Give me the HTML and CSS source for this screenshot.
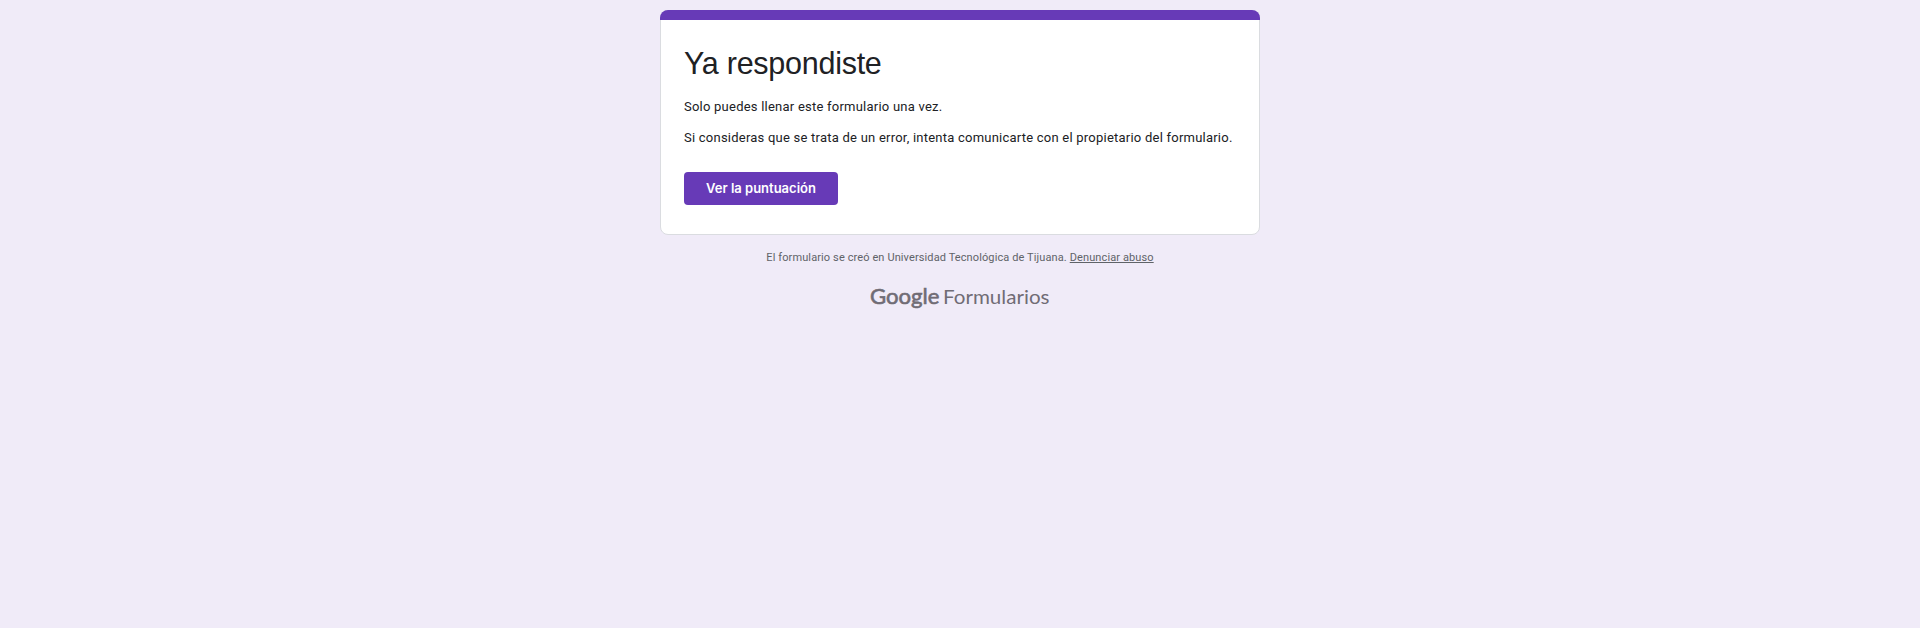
FILE: index.html
```html
<!DOCTYPE html>
<html lang="es">
<head>
<meta charset="utf-8">
<title>Ya respondiste</title>
<link rel="stylesheet" href="styles.css">
</head>
<body>
<main class="page">
  <section class="card">
    <div class="card-accent"></div>
    <div class="card-body">
      <h1 class="title">Ya respondiste</h1>
      <p class="message">Solo puedes llenar este formulario una vez.</p>
      <p class="message">Si consideras que se trata de un error, intenta comunicarte con el propietario del formulario.</p>
      <button class="score-button" type="button"><span>Ver la puntuación</span></button>
    </div>
  </section>
  <footer class="footer">
    <p class="origin">El formulario se creó en Universidad Tecnológica de Tijuana. <a class="report" href="#">Denunciar abuso</a></p>
    <svg class="logo" width="180" height="30" viewBox="0 0 180 30" role="img" aria-label="Google Formularios">
      <text class="logo-google" x="0" y="21.5" textLength="69.500" lengthAdjust="spacingAndGlyphs">Google</text>
      <text class="logo-product" x="73" y="21.5" textLength="106.500" lengthAdjust="spacingAndGlyphs">Formularios</text>
    </svg>
  </footer>
</main>
</body>
</html>
```
FILE: styles.css
```css
* {
  box-sizing: border-box;
}

body {
  margin: 0;
  min-height: 100vh;
  background: #f0ebf8;
  font-family: Roboto, "Liberation Sans", sans-serif;
}

.page {
  width: 600px;
  margin: 0 auto;
  padding-top: 10px;
}

.card {
  height: 225px;
  background: #fff;
  border: 1px solid #dadce0;
  border-radius: 8px;
}

.card-accent {
  height: 10px;
  margin: -1px -1px 0;
  background: #673ab7;
  border-radius: 8px 8px 0 0;
}

.card-body {
  padding: 22px 23px 0;
}

.title {
  margin: 0 0 12px;
  font: 400 30.5px/43px "Liberation Sans", Arial, sans-serif;
  letter-spacing: -0.26px;
  color: #202124;
}

.message {
  margin: 0 0 11px;
  font-size: 13px;
  line-height: 20px;
  letter-spacing: 0.23px;
  color: #202124;
  white-space: nowrap;
}

.score-button {
  display: flex;
  align-items: center;
  justify-content: center;
  width: 154px;
  height: 33px;
  margin-top: 24px;
  padding: 0 0 1px;
  border: 0;
  border-radius: 4px;
  background: #673ab7;
  color: #fff;
  font: 600 13px/20px Inter, Roboto, sans-serif;
  white-space: nowrap;
}

.footer {
  display: flex;
  flex-direction: column;
  align-items: center;
}

.origin {
  margin: 15px 0 0;
  font-size: 11px;
  line-height: 16px;
  letter-spacing: 0.11px;
  color: #5f6368;
  white-space: nowrap;
}

.report {
  color: inherit;
  text-decoration: underline;
}

.logo {
  margin-top: 16px;
  fill: #706c75;
  font-family: Lato, sans-serif;
}

.logo-google {
  font-size: 21.500px;
  font-weight: 400;
  stroke: #706c75;
  stroke-width: 0.6px;
}

.logo-product {
  font-size: 20px;
  font-weight: 400;
}
```
